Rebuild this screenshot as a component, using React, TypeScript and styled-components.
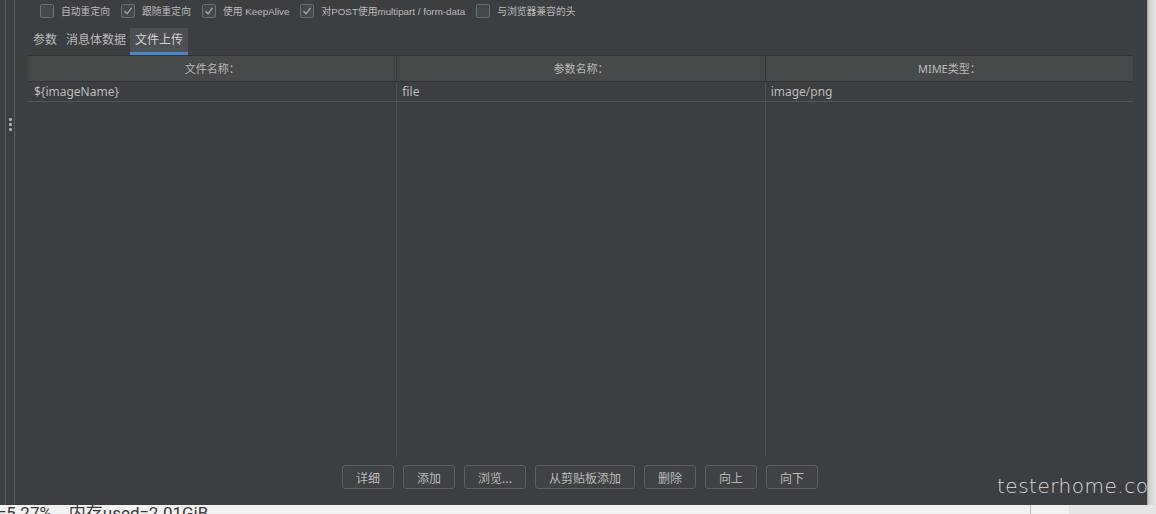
import { createGlobalStyle, styled } from "styled-components";

const GlobalStyle = createGlobalStyle`
  html, body {
    margin: 0;
    padding: 0;
    background: #f2f2f2;
  }
  * {
    box-sizing: border-box;
  }
`;

const Screen = styled.div`
  width: 1156px;
  height: 514px;
  overflow: hidden;
  display: flex;
  flex-direction: column;
  font-family: "Noto Sans", "Noto Sans CJK SC", sans-serif;
`;

const TopArea = styled.div`
  display: flex;
  height: 505px;
`;

const Panel = styled.div`
  position: relative;
  width: 1147px;
  height: 100%;
  background: #3c3f41;
  display: flex;
  overflow: hidden;
`;

const Shadow = styled.div`
  flex: 1;
  background: linear-gradient(to right, #9d9d9d 0px, #cfcfcf 2px, #e4e4e4 9px);
`;

const Gutter = styled.div`
  width: 10px;
  margin-left: 5px;
  border-left: 1px solid #5a5d5f;
  border-right: 1px solid #5a5d5f;
  display: flex;
  flex-direction: column;
  align-items: center;
  padding-top: 118px;
  gap: 2px;
  flex-shrink: 0;
`;

const Dot = styled.span`
  width: 3px;
  height: 3px;
  border-radius: 1px;
  background: #a9abac;
`;

const Content = styled.div`
  flex: 1;
  display: flex;
  flex-direction: column;
  padding: 4px 14px 16px 13px;
`;

const OptionsRow = styled.div`
  display: flex;
  align-items: center;
  height: 14px;
  padding-left: 12px;
  gap: 11px;
`;

const Option = styled.label`
  display: flex;
  align-items: center;
  gap: 7px;
  font-family: "Liberation Sans", "Noto Sans CJK SC", sans-serif;
  font-size: 9.8px;
  color: #bbbbbb;
  white-space: nowrap;
`;

const Box = styled.span<{ $checked?: boolean }>`
  width: 14px;
  height: 14px;
  border: 1px solid #6b6e70;
  border-radius: 2px;
  background: #43494a;
  display: flex;
  align-items: center;
  justify-content: center;
`;

const Tabs = styled.div`
  display: flex;
  margin-top: 10px;
  height: 27px;
`;

const Tab = styled.div<{ $active?: boolean }>`
  padding: 0 5px;
  font-size: 12px;
  line-height: 24px;
  color: ${(p) => (p.$active ? "#d2d2d2" : "#bbbbbb")};
  background: ${(p) => (p.$active ? "#4c5052" : "transparent")};
  border-bottom: 3px solid ${(p) => (p.$active ? "#4a88c7" : "transparent")};
  & + & {
    margin-left: -1px;
  }
`;

const Table = styled.div`
  flex: 1;
  display: flex;
  flex-direction: column;
  border-top: 1px solid #313335;
`;

const HeaderRow = styled.div`
  display: grid;
  grid-template-columns: 1fr 1fr 1fr;
  height: 26px;
  background: #45494a;
  border-bottom: 1px solid #313335;
`;

const HeaderCell = styled.div`
  font-size: 11px;
  color: #bbbbbb;
  text-align: center;
  line-height: 25px;
  & + & {
    border-left: 1px solid #35383a;
  }
`;

const DataRow = styled.div`
  display: grid;
  grid-template-columns: 1fr 1fr 1fr;
  height: 20px;
  border-bottom: 1px solid #505456;
`;

const DataCell = styled.div`
  font-size: 12px;
  color: #bbbbbb;
  line-height: 19px;
  padding-left: 6px;
  & + & {
    border-left: 1px solid #4d5153;
    padding-left: 5px;
  }
`;

const Filler = styled.div`
  flex: 1;
  display: grid;
  grid-template-columns: 1fr 1fr 1fr;
`;

const FillerCell = styled.div`
  & + & {
    border-left: 1px solid #4d5153;
  }
`;

const Buttons = styled.div`
  display: flex;
  justify-content: center;
  gap: 9px;
  margin-top: 8px;
  padding-right: 1px;
`;

const Button = styled.button`
  height: 24px;
  padding: 0 13px;
  min-width: 52px;
  border: 1px solid #5e6163;
  border-radius: 3px;
  background: #3f4345;
  color: #bbbbbb;
  font-family: "Noto Sans CJK SC", sans-serif;
  font-size: 12px;
`;

const Watermark = styled.div`
  position: absolute;
  left: 997px;
  top: 474px;
  font-family: "DejaVu Sans", sans-serif;
  font-weight: 200;
  font-size: 20px;
  line-height: 24px;
  letter-spacing: 0.5px;
  color: #dcdcdc;
  white-space: nowrap;
`;

const StatusBar = styled.div`
  height: 9px;
  position: relative;
  overflow: hidden;
  display: flex;
  background: #f2f2f2;
`;

const StatusText = styled.div`
  margin-top: -2px;
  margin-left: -3px;
  font-family: Roboto, "Noto Sans CJK SC", sans-serif;
  font-size: 17px;
  line-height: 20px;
  color: #3a3a3a;
  white-space: pre;
  width: 1034px;
  border-right: 1px solid #b8b8b8;
  flex-shrink: 0;
`;

const StatusSpacer = styled.div`
  width: 38px;
`;

const StatusSide = styled.div`
  flex: 1;
  background: #e6e6e6;
`;

const Check = () => (
  <svg width="10" height="10" viewBox="0 0 10 10">
    <path d="M1.5 5.2 L4 7.8 L8.6 1.8" fill="none" stroke="#a8a8a8" strokeWidth="1.3" />
  </svg>
);

const options = [
  { label: "自动重定向", checked: false },
  { label: "跟随重定向", checked: true },
  { label: "使用 KeepAlive", checked: true },
  { label: "对POST使用multipart / form-data", checked: true },
  { label: "与浏览器兼容的头", checked: false },
];

const columns = ["文件名称：", "参数名称：", "MIME类型："];
const row = ["${imageName}", "file", "image/png"];
const actions = ["详细", "添加", "浏览...", "从剪贴板添加", "删除", "向上", "向下"];

export default function App() {
  return (
    <>
      <GlobalStyle />
      <Screen>
        <TopArea>
          <Panel>
            <Gutter>
              <Dot />
              <Dot />
              <Dot />
            </Gutter>
            <Content>
              <OptionsRow>
                {options.map((o) => (
                  <Option key={o.label}>
                    <Box $checked={o.checked}>{o.checked && <Check />}</Box>
                    {o.label}
                  </Option>
                ))}
              </OptionsRow>
              <Tabs>
                <Tab>参数</Tab>
                <Tab>消息体数据</Tab>
                <Tab $active>文件上传</Tab>
              </Tabs>
              <Table>
                <HeaderRow>
                  {columns.map((c) => (
                    <HeaderCell key={c}>{c}</HeaderCell>
                  ))}
                </HeaderRow>
                <DataRow>
                  {row.map((c) => (
                    <DataCell key={c}>{c}</DataCell>
                  ))}
                </DataRow>
                <Filler>
                  <FillerCell />
                  <FillerCell />
                  <FillerCell />
                </Filler>
              </Table>
              <Buttons>
                {actions.map((a) => (
                  <Button key={a}>{a}</Button>
                ))}
              </Buttons>
            </Content>
            <Watermark>testerhome.com</Watermark>
          </Panel>
          <Shadow />
        </TopArea>
        <StatusBar>
          <StatusText>{"=5.27%    内存used=2.01GiB"}</StatusText>
          <StatusSpacer />
          <StatusSide />
        </StatusBar>
      </Screen>
    </>
  );
}
